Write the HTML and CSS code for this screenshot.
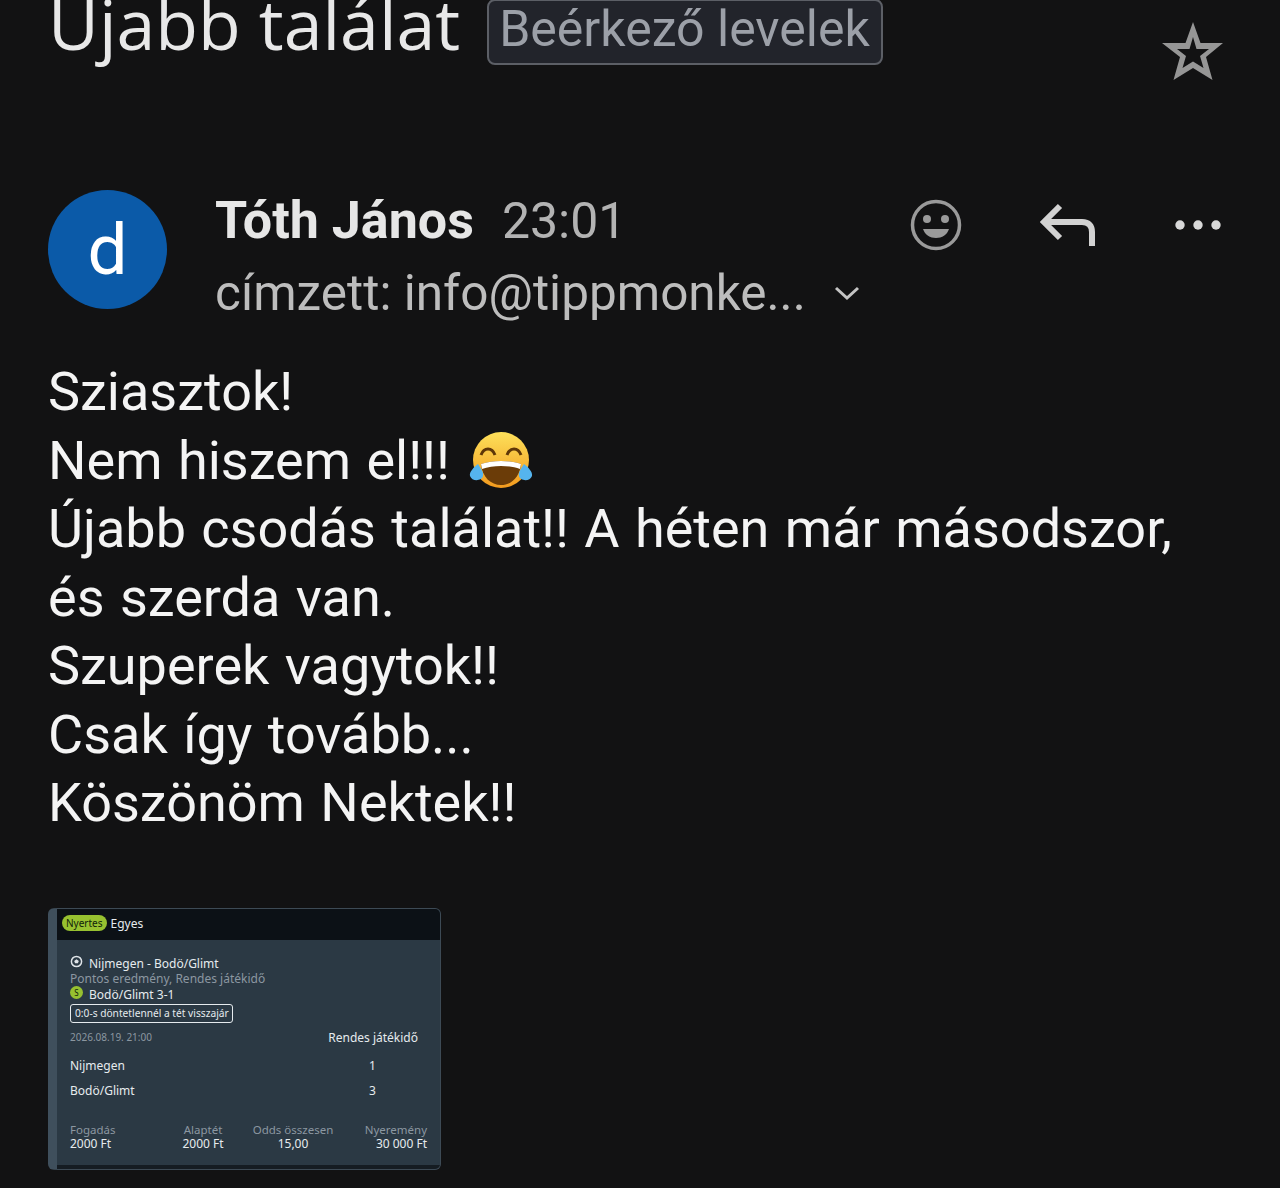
FILE: index.html
```html
<!DOCTYPE html>
<html lang="hu">
<head>
	<meta charset="utf-8">
	<title>Újabb találat</title>
	<link rel="stylesheet" href="styles.css">
</head>
<body>
	<div class="mail">
		<div class="subject-row">
			<h1 class="subject">Újabb találat</h1>
			<span class="label">Beérkező levelek</span>
			<svg class="star" viewBox="0 0 62 60" width="62" height="60">
				<path fill-rule="evenodd" fill="#969696" d="M31 2 L38.500 23 L61 23 L44 37 L50.500 60 L31 48 L11.500 60 L18 37 L0 23 L23.500 23 Z M31 17 L27.500 29 L15 29 L24 36 L20.500 48 L31 41.500 L41.500 48 L38 36 L47 29 L34.500 29 Z"/>
			</svg>
		</div>

		<div class="sender-row">
			<div class="avatar">d</div>
			<div class="sender-info">
				<div class="sender-line">
					<span class="sender-name">Tóth János</span>
					<span class="sender-time">23:01</span>
				</div>
				<div class="to-line">
					<span>címzett: info@tippmonke...</span>
					<svg class="chevron" viewBox="0 0 28 18" width="28" height="18">
						<path d="M3 4 L14 14 L25 4" fill="none" stroke="#c4c4c4" stroke-width="3"/>
					</svg>
				</div>
			</div>
			<div class="actions">
				<svg viewBox="0 0 52 52" width="52" height="52">
					<circle cx="26" cy="26" r="23.500" fill="none" stroke="#9a9a9a" stroke-width="3.500"/>
					<circle cx="17" cy="20" r="4" fill="#9a9a9a"/>
					<circle cx="35" cy="20" r="4" fill="#9a9a9a"/>
					<path d="M13 30 H39 C37 36 32 39 26 39 C20 39 15 36 13 30 Z" fill="#9a9a9a"/>
				</svg>
				<svg viewBox="0 0 56 44" width="56" height="44">
					<path d="M20 3 L4 19 L20 35 M4 19 H42 C49 19 52 23 52 29 V43" fill="none" stroke="#d2d2d2" stroke-width="6"/>
				</svg>
				<svg class="dots" viewBox="0 0 48 12" width="48" height="12">
					<circle cx="6" cy="6" r="4.700" fill="#d8d8d8"/>
					<circle cx="24" cy="6" r="4.700" fill="#d8d8d8"/>
					<circle cx="42" cy="6" r="4.700" fill="#d8d8d8"/>
				</svg>
			</div>
		</div>

		<div class="message">
			<div>Sziasztok!</div>
			<div>Nem hiszem el!!! <svg class="emoji" viewBox="0 0 64 60" width="64" height="60">
				<defs>
					<linearGradient id="face" x1="0" y1="0" x2="0" y2="1">
						<stop offset="0" stop-color="#fde05a"/>
						<stop offset="1" stop-color="#f29a1e"/>
					</linearGradient>
				</defs>
				<circle cx="32" cy="29" r="28" fill="url(#face)"/>
				<path d="M12 24 C15 16 23 16 26 24 M38 24 C41 16 49 16 52 24" fill="none" stroke="#5e3608" stroke-width="3"/>
				<path d="M12 33 C24 29 40 29 52 33 C51 46 42 54 32 54 C22 54 13 46 12 33 Z" fill="#6b3c08"/>
				<path d="M12 33 C24 29 40 29 52 33 L51 38 C40 34 24 34 13 38 Z" fill="#fff"/>
				<path d="M9 33 C12 38 15 41 14 45 C13 50 3 51 1 45 C0 41 5 36 9 33 Z" fill="#55b4ee"/>
				<path d="M55 33 C52 38 49 41 50 45 C51 50 61 51 63 45 C64 41 59 36 55 33 Z" fill="#55b4ee"/>
			</svg></div>
			<div>Újabb csodás találat!! A héten már másodszor,</div>
			<div>és szerda van.</div>
			<div>Szuperek vagytok!!</div>
			<div>Csak így tovább...</div>
			<div>Köszönöm Nektek!!</div>
		</div>

		<div class="bet-card">
			<div class="bet-head">
				<span class="badge">Nyertes</span>
				<span>Egyes</span>
			</div>
			<div class="bet-body">
				<div class="bet-line">
					<svg class="mini" viewBox="0 0 14 14" width="13" height="13">
						<circle cx="7" cy="7" r="5.500" fill="#2b3944" stroke="#dfe4e8" stroke-width="1.600"/>
						<path d="M7 4.500 L9.500 6.500 L8.500 9 H5.500 L4.500 6.500 Z" fill="#dfe4e8"/>
					</svg>
					<span>Nijmegen - Bodö/Glimt</span>
				</div>
				<div class="bet-market">Pontos eredmény, Rendes játékidő</div>
				<div class="bet-line">
					<span class="coin">S</span>
					<span>Bodö/Glimt 3-1</span>
				</div>
				<div class="bet-note">0:0-s döntetlennél a tét visszajár</div>
				<div class="score-grid">
					<span class="bet-date">2026.08.19. 21:00</span>
					<span class="period">Rendes játékidő</span>
					<span>Nijmegen</span>
					<span class="score">1</span>
					<span>Bodö/Glimt</span>
					<span class="score">3</span>
				</div>
				<div class="totals">
					<div class="total"><span class="total-label">Fogadás</span><span>2000 Ft</span></div>
					<div class="total total-mid"><span class="total-label">Alaptét</span><span>2000 Ft</span></div>
					<div class="total total-mid"><span class="total-label">Odds összesen</span><span>15,00</span></div>
					<div class="total total-end"><span class="total-label">Nyeremény</span><span>30 000 Ft</span></div>
				</div>
			</div>
		</div>
	</div>
</body>
</html>
```

FILE: styles.css
```css
:root {
  --background-color: #121213;
  --card-color: #2b3944;
  --muted-color: #8b97a1;
  --green-color: #97c130;
}

html,
body {
  margin: 0;
  height: 100%;
  overflow: hidden;
  background-color: var(--background-color);
}

.mail {
  padding: 0 48px 0 48px;
  font-family: Roboto, "Liberation Sans", sans-serif;
  color: #f1f1f1;
}

.subject-row {
  display: flex;
  align-items: flex-start;
  margin-top: -14px;
  height: 204px;
}

.subject {
  margin: 0 27px 0 0;
  font-family: "Open Sans", Roboto, sans-serif;
  font-size: 69.800px;
  font-weight: 400;
  line-height: 74px;
  color: #e8e8e8;
  white-space: nowrap;
}

.label {
  box-sizing: border-box;
  width: 396px;
  height: 66px;
  margin-top: 13px;
  padding-left: 10px;
  border: 2px solid #5c5f66;
  border-radius: 8px;
  background-color: #22242b;
  font-size: 50px;
  line-height: 56px;
  color: #9ca0a8;
  white-space: nowrap;
}

.star {
  margin: 34px 8px 0 auto;
}

.sender-row {
  display: flex;
  align-items: flex-start;
  height: 168px;
}

.avatar {
  flex: none;
  width: 119px;
  height: 119px;
  margin-right: 48px;
  border-radius: 50%;
  background-color: #0b5aa8;
  font-size: 71px;
  font-weight: 450;
  line-height: 119px;
  text-align: center;
  color: #fff;
}

.sender-info {
  flex: 1;
}

.sender-line {
  display: flex;
  align-items: baseline;
  gap: 28px;
  height: 68px;
  font-size: 52px;
  line-height: 62px;
}

.sender-name {
  font-weight: 700;
  color: #e6e6e6;
}

.sender-time {
  font-size: 50px;
  color: #b3b3b3;
}

.to-line {
  display: flex;
  align-items: center;
  gap: 27px;
  font-size: 49.500px;
  line-height: 70px;
  color: #bdbdbd;
}

.actions {
  display: flex;
  align-items: center;
  gap: 78px;
  margin: 9px 10px 0 0;
}

.message {
  font-size: 54px;
  line-height: 68.500px;
  word-spacing: 2px;
  color: #f4f4f4;
  white-space: nowrap;
}

.emoji {
  vertical-align: -12px;
  margin-left: 4px;
}

.bet-card {
  box-sizing: border-box;
  display: flex;
  flex-direction: column;
  width: 393px;
  height: 262px;
  margin-top: 70px;
  border: 1px solid #3d4a55;
  border-left: 9px solid #3f4f5c;
  border-radius: 6px;
  overflow: hidden;
  background-color: var(--card-color);
  font-family: "Noto Sans", Roboto, sans-serif;
  font-size: 12px;
  line-height: 15px;
  color: #e6ebee;
}

.bet-head {
  display: flex;
  align-items: center;
  gap: 4px;
  height: 29px;
  padding: 0 0 2px 5px;
  background-color: #0c1116;
}

.badge {
  padding: 0 4px;
  border-radius: 9px;
  background-color: var(--green-color);
  font-size: 10px;
  line-height: 16px;
  color: #10210a;
}

.bet-body {
  flex: 1;
  padding: 16px 13px 0 13px;
  border-bottom: 4px solid #151c22;
}

.bet-line {
  display: flex;
  align-items: center;
  gap: 6px;
  height: 16px;
}

.mini {
  margin-top: -4px;
}

.coin {
  flex: none;
  width: 13px;
  height: 13px;
  margin-top: -4px;
  border-radius: 50%;
  background-color: var(--green-color);
  font-size: 8px;
  line-height: 13px;
  text-align: center;
  color: #10210a;
}

.bet-market {
  height: 16px;
  margin-top: -1px;
  color: var(--muted-color);
}

.bet-note {
  box-sizing: border-box;
  width: 163px;
  height: 19px;
  margin-top: 1px;
  border: 1px solid #e6ebee;
  border-radius: 3px;
  padding-left: 4px;
  font-size: 10.200px;
  line-height: 17px;
  white-space: nowrap;
}

.score-grid {
  display: grid;
  grid-template-columns: 1fr 91px;
  grid-auto-rows: 25px;
  align-items: center;
  margin-top: 2px;
  padding-right: 9px;
}

.score-grid span:nth-child(n+3) {
  position: relative;
  top: 3px;
}

.bet-date {
  font-size: 10px;
  color: var(--muted-color);
}

.period {
  white-space: nowrap;
  text-align: right;
}

.score {
  text-align: center;
}

.totals {
  display: grid;
  grid-template-columns: 90px 86px 94px 87px;
  margin-top: 23px;
}

.total {
  display: flex;
  flex-direction: column;
  line-height: 14px;
  white-space: nowrap;
}

.total-mid {
  align-items: center;
}

.total-end {
  align-items: flex-end;
}

.total-label {
  font-size: 11.500px;
  color: var(--muted-color);
}
```
